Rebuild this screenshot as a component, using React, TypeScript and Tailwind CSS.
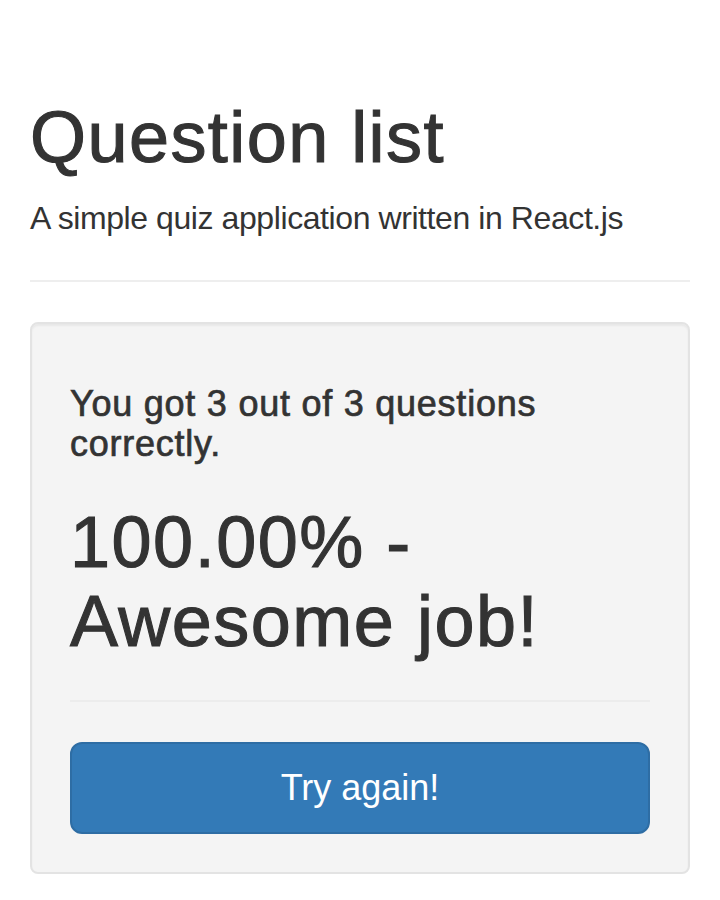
import React from "react";

export default function App() {
  return (
    <div className="min-h-[900px] bg-white px-[30px] pt-[98px] text-[#333] font-['Liberation_Sans',Arial,sans-serif]">
      <h1 className="m-0 text-[72px] leading-[1.1] font-normal tracking-[0.02em] [-webkit-text-stroke:1.1px_#333]">
        Question list
      </h1>
      <p className="mt-[19px] text-[32px] leading-[44.8px] tracking-[-0.013em]">
        A simple quiz application written in React.js
      </p>
      <div className="mt-[39px] mb-[40px] h-[2px] bg-[#eee]" />
      <div className="rounded-[8px] border-2 border-[#e3e3e3] bg-[#f4f4f4] px-[38px] pt-[60px] pb-[38px] shadow-[inset_0_2px_2px_rgba(0,0,0,0.05)]">
        <h4 className="m-0 text-[36px] leading-[1.1] font-normal tracking-[0.021em] [-webkit-text-stroke:0.7px_#333]">
          You got 3 out of 3 questions correctly.
        </h4>
        <h1 className="mt-[40px] text-[72px] leading-[1.1] font-normal tracking-[0.021em] [-webkit-text-stroke:1.1px_#333]">
          100.00% - Awesome job!
        </h1>
        <div className="mt-[38px] mb-[40px] h-[2px] bg-[#ececec]" />
        <button
          type="button"
          className="block w-full rounded-[12px] border-2 border-[#2e6da4] bg-[#337ab7] py-[20px] text-center text-[36px] leading-[48px] text-white"
        >
          Try again!
        </button>
      </div>
    </div>
  );
}
